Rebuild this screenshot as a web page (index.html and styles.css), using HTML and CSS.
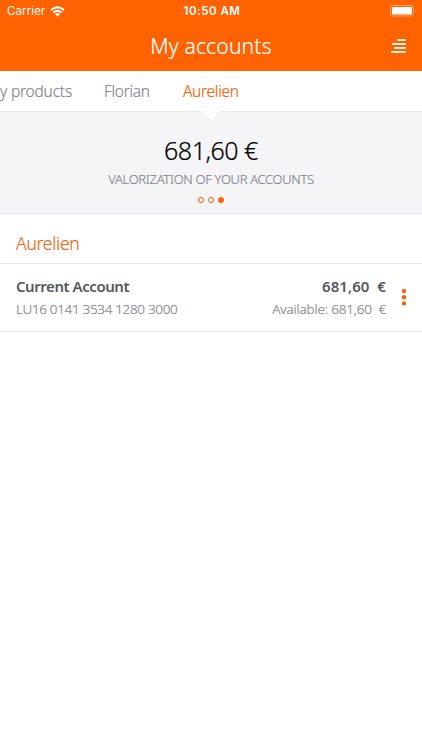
FILE: index.html
```html
<!DOCTYPE html>
<html lang="en">
<head>
<meta charset="utf-8">
<title>My accounts</title>
<link rel="stylesheet" href="styles.css">
</head>
<body>
<header class="header">
  <div class="status">
    <div class="carrier"><span>Carrier</span>
      <svg class="wifi" width="15" height="11" viewBox="0 0 15 11" fill="none" stroke="#fff" stroke-width="2"><path d="M1 4.1Q7.5-1.6 14 4.1M3.3 6.5Q7.5 2.900 11.700 6.500"/><path d="M5 8.1Q7.5 6.1 10 8.1L7.5 10.7Z" fill="#fff" stroke="none"/></svg>
    </div>
    <span class="time">10:50 AM</span>
    <svg class="battery" width="27" height="12" viewBox="0 0 27 12"><rect x=".5" y=".5" width="23" height="10.5" rx="2.5" fill="none" stroke="#ffa066"/><rect x="2" y="2" width="20" height="7.5" rx="1" fill="#fff"/><path d="M25 4q1.5 1.7 0 3.5z" fill="#ffa066"/></svg>
  </div>
  <div class="titlebar">
    <h1 class="title">My accounts</h1>
    <svg class="menu" width="16" height="15" viewBox="0 0 16 15" fill="#fff1dc"><path d="M7 0h9v2H7zM2 4h14v2H2zM4 8h12v2H4zM1 12h15v2H1z"/></svg>
  </div>
</header>
<nav class="tabs"><span class="tab products">y products</span><span class="tab florian">Florian</span><span class="tab active">Aurelien</span></nav>
<section class="summary">
  <svg class="notch" width="22" height="12" viewBox="0 0 22 12"><path d="M0 0h22v1L11 11 0 1z" fill="#fff"/><path d="M0 .5h1L11 10.500 21 .5h1" fill="none" stroke="#e8e8ea"/></svg>
  <div class="total">681,60 €</div>
  <div class="caption">VALORIZATION OF YOUR ACCOUNTS</div>
  <div class="dots"><i class="dot"></i><i class="dot"></i><i class="dot filled"></i></div>
</section>
<h2 class="owner"><span>Aurelien</span></h2>
<section class="account">
  <div class="details"><div class="name"><span>Current Account</span></div><div class="iban"><span>LU16 0141 3534 1280 3000</span></div></div>
  <div class="amounts"><div class="amount"><span>681,60&nbsp; €</span></div><div class="available"><span>Available: 681,60&nbsp; €</span></div></div>
  <svg class="more" width="6" height="18" viewBox="0 0 6 18" fill="#f0650f"><circle cx="3" cy="3" r="2.200"/><circle cx="3" cy="9.200" r="2.200"/><circle cx="3" cy="15.400" r="2.200"/></svg>
</section>
</body>
</html>
```
FILE: styles.css
```css
* { box-sizing: border-box; }
body { margin: 0; height: 750px; overflow: hidden; background: #fff; font-family: "Noto Sans", sans-serif; font-weight: 300; color: #85878f; -webkit-text-stroke: .2px currentColor; }
h1, h2 { margin: 0; font-weight: 300; }
.header { height: 71px; background: #ff6200; color: #fff; }
.status { display: grid; grid-template-columns: 1fr auto 1fr; height: 22px; align-items: center; padding: 0 5px 0 7px; font-family: Inter, sans-serif; font-size: 12px; font-weight: 400; -webkit-text-stroke: 0; }
.carrier { display: flex; align-items: center; gap: 5px; font-size: 11.500px; letter-spacing: .1px; }
.time { font-size: 11.5px; font-weight: 600; letter-spacing: .5px; }
.battery { justify-self: end; }
.titlebar { display: grid; grid-template-columns: 1fr auto 1fr; height: 48px; align-items: center; padding: 0 16px; }
.title { grid-column: 2; font-size: 21px; line-height: 48px; letter-spacing: .2px; }
.menu { justify-self: end; margin-top: 1px; }
.tabs { display: flex; height: 40px; line-height: 41px; font-size: 15.500px; white-space: nowrap; }
.products { width: 104px; letter-spacing: -.2px; }
.florian { width: 79px; letter-spacing: -.3px; }
.active { color: #f0650f; letter-spacing: -.3px; }
.summary { display: flex; flex-direction: column; align-items: center; position: relative; height: 103px; padding-top: 23px; background: #f5f5f8; border: solid #e8e8ea; border-width: 1px 0; }
.notch { position: absolute; top: -1px; left: 200px; }
.total { height: 30px; line-height: 30px; font-size: 25px; color: #000; letter-spacing: -.5px; }
.caption { height: 28px; line-height: 29px; font-size: 13px; white-space: nowrap; letter-spacing: -.32px; }
.dots { display: flex; gap: 4px; margin-top: 4px; }
.dot { width: 6px; height: 6px; border: 1px solid #ff6200; border-radius: 50%; }
.filled { background: #ff6200; }
.owner { height: 50px; padding-left: 16px; line-height: 59px; border-bottom: 1px solid #e6e6e8; color: #f0650f; font-size: 17.500px; letter-spacing: -.25px; }
.account { display: flex; height: 68px; padding: 11px 15px 0 16px; border-bottom: 1px solid #e6e6e8; white-space: nowrap; }
.details { flex: 1; }
.amounts { text-align: right; }
.name, .amount { height: 23px; line-height: 23px; font-size: 15px; font-weight: 600; color: #55565a; letter-spacing: -.45px; -webkit-text-stroke: 0; }
.amount { letter-spacing: .05px; }
.iban, .available { height: 23px; line-height: 23px; font-size: 13.500px; letter-spacing: -.33px; }
.available { line-height: 22px; letter-spacing: -.17px; }
.more { margin: 13px 0 0 15px; }
```
